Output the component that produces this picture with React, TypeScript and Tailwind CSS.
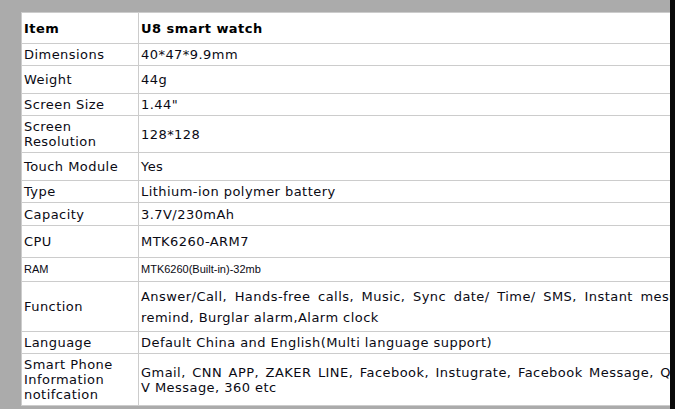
import React from "react";

type Row = {
  label: React.ReactNode;
  value: React.ReactNode;
  h: string;
  small?: boolean;
  bold?: boolean;
  first?: boolean;
};

const rows: Row[] = [
  { label: "Item", value: "U8 smart watch", h: "h-[32px]", bold: true, first: true },
  { label: "Dimensions", value: "40*47*9.9mm", h: "h-[22px]" },
  { label: "Weight", value: "44g", h: "h-[28px]" },
  { label: "Screen Size", value: "1.44\"", h: "h-[22px]" },
  {
    label: (
      <>
        Screen
        <br />
        Resolution
      </>
    ),
    value: "128*128",
    h: "h-[37px]",
  },
  { label: "Touch Module", value: "Yes", h: "h-[28px]" },
  { label: "Type", value: "Lithium-ion polymer battery", h: "h-[22px]" },
  { label: "Capacity", value: "3.7V/230mAh", h: "h-[23px]" },
  { label: "CPU", value: "MTK6260-ARM7", h: "h-[32px]" },
  { label: "RAM", value: "MTK6260(Built-in)-32mb", h: "h-[24px]", small: true },
  {
    label: "Function",
    value: (
      <div className="leading-[21px]">
        <div className="whitespace-nowrap [word-spacing:3px]">
          Answer/Call, Hands-free calls, Music, Sync date/ Time/ SMS, Instant message
        </div>
        <div className="whitespace-nowrap">remind, Burglar alarm,Alarm clock</div>
      </div>
    ),
    h: "h-[50px]",
  },
  { label: "Language", value: "Default China and English(Multi language support)", h: "h-[22px]" },
  {
    label: (
      <>
        Smart Phone
        <br />
        Information
        <br />
        notifcation
      </>
    ),
    value: (
      <div className="whitespace-nowrap">
        <span className="[word-spacing:1.9px]">
          Gmail, CNN APP, ZAKER LINE, Facebook, Instugrate, Facebook Message, QQ, Wechat, Skype, Whatsapp,
        </span>
        <br />
        V Message, 360 etc
      </div>
    ),
    h: "h-[52px]",
  },
];

export default function App() {
  return (
    <div className="flex h-[409px] w-[675px] overflow-hidden bg-[#ababab]">
      <div className="w-[670px] overflow-hidden pl-[21px] pt-[12px]">
        <div
          className="w-[900px] bg-white text-[13px] leading-[15px] tracking-[0.45px] text-[#0a0a14]"
          style={{ fontFamily: '"DejaVu Sans", Verdana, sans-serif' }}
        >
          {rows.map((r, i) => (
            <div
              key={i}
              className={`flex border-b border-[#cccccc] ${r.first ? "border-t" : ""} ${r.h}`}
            >
              <div
                className={`flex w-[118px] shrink-0 items-center border-x border-[#cccccc] pl-[2px] ${
                  r.bold ? "font-bold text-black" : ""
                } ${r.small ? "text-[11px] tracking-normal" : ""}`}
                style={r.small ? { fontFamily: '"Liberation Sans", Arial, sans-serif' } : undefined}
              >
                <div>{r.label}</div>
              </div>
              <div
                className={`flex min-w-0 flex-1 items-center pl-[2px] ${
                  r.bold ? "font-bold text-black" : ""
                } ${r.small ? "text-[11px] tracking-normal" : ""}`}
                style={r.small ? { fontFamily: '"Liberation Sans", Arial, sans-serif' } : undefined}
              >
                <div className="whitespace-nowrap">{r.value}</div>
              </div>
            </div>
          ))}
        </div>
      </div>
      <div className="w-[5px] shrink-0 bg-[#0a0a0a]" />
    </div>
  );
}
